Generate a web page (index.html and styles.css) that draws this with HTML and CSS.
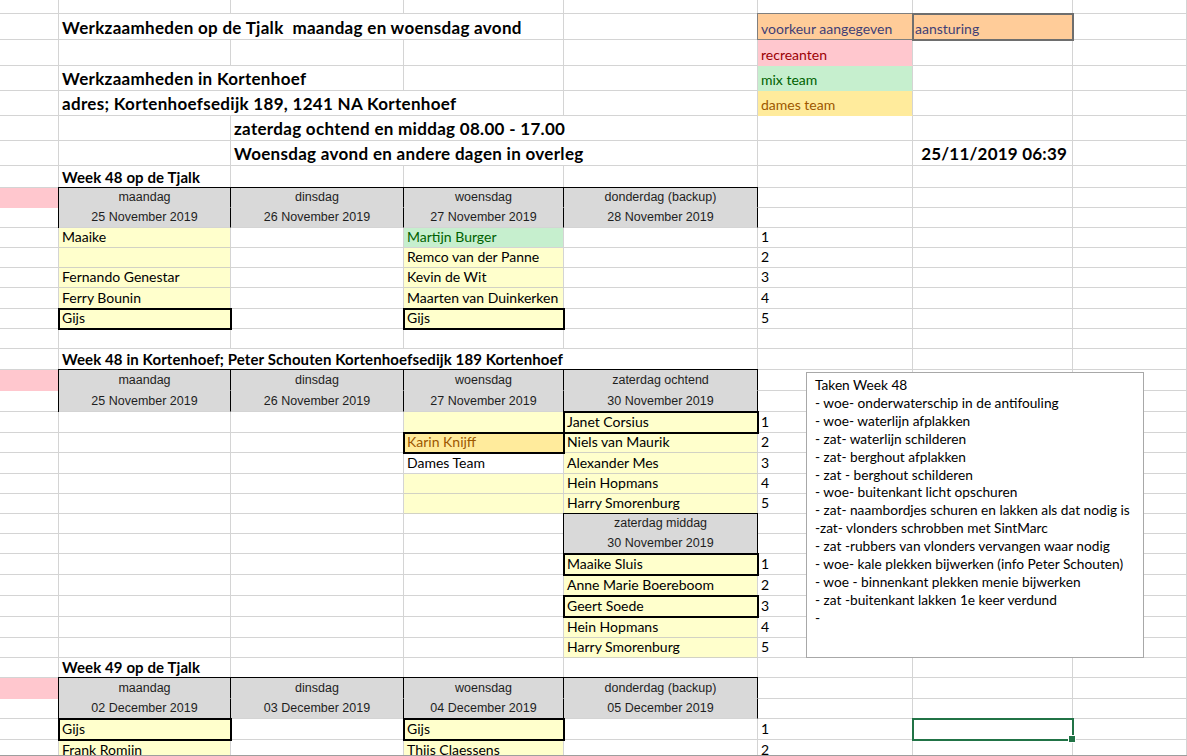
FILE: index.html
```html
<!DOCTYPE html>
<html lang="nl">
<head>
    <meta charset="UTF-8">
    <meta name="viewport" content="width=device-width, initial-scale=1.0">
    <title>Werkzaamheden Tjalk</title>
    <link rel="stylesheet" href="styles.css">
</head>
<body>
<div class="sheet">

    <div class="row h14"><div class="c"></div><div class="c"></div><div class="c"></div><div class="c"></div><div class="c"></div><div class="c"></div><div class="c"></div><div class="c"></div></div>

    <div class="row h26">
        <div class="c"></div>
        <div class="c s3 title">Werkzaamheden op de Tjalk&nbsp; maandag en woensdag avond</div>
        <div class="c"></div>
        <div class="c input">voorkeur aangegeven</div>
        <div class="c input lead">aansturing</div>
        <div class="c"></div>
    </div>

    <div class="row h26"><div class="c"></div><div class="c"></div><div class="c"></div><div class="c"></div><div class="c"></div><div class="c bad">recreanten</div><div class="c"></div><div class="c"></div></div>

    <div class="row h25">
        <div class="c"></div>
        <div class="c s2 title">Werkzaamheden in Kortenhoef</div>
        <div class="c"></div><div class="c"></div>
        <div class="c good legend">mix team</div>
        <div class="c"></div><div class="c"></div>
    </div>

    <div class="row h25">
        <div class="c"></div>
        <div class="c s3 title">adres; Kortenhoefsedijk 189, 1241 NA Kortenhoef</div>
        <div class="c"></div>
        <div class="c neutral legend">dames team</div>
        <div class="c"></div><div class="c"></div>
    </div>

    <div class="row h25">
        <div class="c"></div><div class="c"></div>
        <div class="c s3 title">zaterdag ochtend en middag 08.00 - 17.00</div>
        <div class="c"></div><div class="c"></div><div class="c"></div>
    </div>

    <div class="row h25">
        <div class="c"></div><div class="c"></div>
        <div class="c s3 title">Woensdag avond en andere dagen in overleg</div>
        <div class="c"></div>
        <div class="c title right">25/11/2019 06:39</div>
        <div class="c"></div>
    </div>

    <!-- week 48 op de tjalk -->
    <div class="row h22"><div class="c"></div><div class="c week">Week 48 op de Tjalk</div><div class="c"></div><div class="c"></div><div class="c"></div><div class="c"></div><div class="c"></div><div class="c"></div></div>
    <div class="row">
        <div class="c pink"></div>
        <div class="c hd first">maandag</div>
        <div class="c hd">dinsdag</div>
        <div class="c hd">woensdag</div>
        <div class="c hd">donderdag (backup)</div>
        <div class="c"></div><div class="c"></div><div class="c"></div>
    </div>
    <div class="row">
        <div class="c"></div>
        <div class="c hd2 first">25 November 2019</div>
        <div class="c hd2">26 November 2019</div>
        <div class="c hd2">27 November 2019</div>
        <div class="c hd2">28 November 2019</div>
        <div class="c"></div><div class="c"></div><div class="c"></div>
    </div>
    <div class="row"><div class="c"></div><div class="c note">Maaike</div><div class="c"></div><div class="c good">Martijn Burger</div><div class="c"></div><div class="c">1</div><div class="c"></div><div class="c"></div></div>
    <div class="row"><div class="c"></div><div class="c note"></div><div class="c"></div><div class="c note">Remco van der Panne</div><div class="c"></div><div class="c">2</div><div class="c"></div><div class="c"></div></div>
    <div class="row"><div class="c"></div><div class="c note">Fernando Genestar</div><div class="c"></div><div class="c note">Kevin de Wit</div><div class="c"></div><div class="c">3</div><div class="c"></div><div class="c"></div></div>
    <div class="row h21"><div class="c"></div><div class="c note">Ferry Bounin</div><div class="c"></div><div class="c note">Maarten van Duinkerken</div><div class="c"></div><div class="c">4</div><div class="c"></div><div class="c"></div></div>
    <div class="row"><div class="c"></div><div class="c note thick">Gijs</div><div class="c"></div><div class="c note thick">Gijs</div><div class="c"></div><div class="c">5</div><div class="c"></div><div class="c"></div></div>
    <div class="row"><div class="c"></div><div class="c"></div><div class="c"></div><div class="c"></div><div class="c"></div><div class="c"></div><div class="c"></div><div class="c"></div></div>

    <!-- week 48 in kortenhoef -->
    <div class="row h21">
        <div class="c"></div>
        <div class="c s4 week">Week 48 in Kortenhoef; Peter Schouten Kortenhoefsedijk 189 Kortenhoef</div>
        <div class="c"></div><div class="c"></div><div class="c"></div>
    </div>
    <div class="row h21">
        <div class="c pink"></div>
        <div class="c hd first">maandag</div>
        <div class="c hd">dinsdag</div>
        <div class="c hd">woensdag</div>
        <div class="c hd">zaterdag ochtend</div>
        <div class="c"></div><div class="c"></div><div class="c"></div>
    </div>
    <div class="row h21">
        <div class="c"></div>
        <div class="c hd2 first">25 November 2019</div>
        <div class="c hd2">26 November 2019</div>
        <div class="c hd2">27 November 2019</div>
        <div class="c hd2">30 November 2019</div>
        <div class="c"></div><div class="c"></div><div class="c"></div>
    </div>
    <div class="row h21"><div class="c"></div><div class="c"></div><div class="c"></div><div class="c note"></div><div class="c note thick">Janet Corsius</div><div class="c">1</div><div class="c"></div><div class="c"></div></div>
    <div class="row"><div class="c"></div><div class="c"></div><div class="c"></div><div class="c neutral thick">Karin Knijff</div><div class="c note">Niels van Maurik</div><div class="c">2</div><div class="c"></div><div class="c"></div></div>
    <div class="row h21"><div class="c"></div><div class="c"></div><div class="c"></div><div class="c">Dames Team</div><div class="c note">Alexander Mes</div><div class="c">3</div><div class="c"></div><div class="c"></div></div>
    <div class="row"><div class="c"></div><div class="c"></div><div class="c"></div><div class="c note"></div><div class="c note">Hein Hopmans</div><div class="c">4</div><div class="c"></div><div class="c"></div></div>
    <div class="row"><div class="c"></div><div class="c"></div><div class="c"></div><div class="c note"></div><div class="c note">Harry Smorenburg</div><div class="c">5</div><div class="c"></div><div class="c"></div></div>
    <div class="row h19"><div class="c"></div><div class="c"></div><div class="c"></div><div class="c"></div><div class="c hd first">zaterdag middag</div><div class="c"></div><div class="c"></div><div class="c"></div></div>
    <div class="row h21"><div class="c"></div><div class="c"></div><div class="c"></div><div class="c"></div><div class="c hd2 first">30 November 2019</div><div class="c"></div><div class="c"></div><div class="c"></div></div>
    <div class="row h21"><div class="c"></div><div class="c"></div><div class="c"></div><div class="c"></div><div class="c note thick">Maaike Sluis</div><div class="c">1</div><div class="c"></div><div class="c"></div></div>
    <div class="row h21"><div class="c"></div><div class="c"></div><div class="c"></div><div class="c"></div><div class="c note">Anne Marie Boereboom</div><div class="c">2</div><div class="c"></div><div class="c"></div></div>
    <div class="row h21"><div class="c"></div><div class="c"></div><div class="c"></div><div class="c"></div><div class="c note thick">Geert Soede</div><div class="c">3</div><div class="c"></div><div class="c"></div></div>
    <div class="row h21"><div class="c"></div><div class="c"></div><div class="c"></div><div class="c"></div><div class="c note">Hein Hopmans</div><div class="c">4</div><div class="c"></div><div class="c"></div></div>
    <div class="row"><div class="c"></div><div class="c"></div><div class="c"></div><div class="c"></div><div class="c note">Harry Smorenburg</div><div class="c">5</div><div class="c"></div><div class="c"></div></div>

    <!-- week 49 op de tjalk -->
    <div class="row"><div class="c"></div><div class="c week">Week 49 op de Tjalk</div><div class="c"></div><div class="c"></div><div class="c"></div><div class="c"></div><div class="c"></div><div class="c"></div></div>
    <div class="row h21">
        <div class="c pink"></div>
        <div class="c hd first">maandag</div>
        <div class="c hd">dinsdag</div>
        <div class="c hd">woensdag</div>
        <div class="c hd">donderdag (backup)</div>
        <div class="c"></div><div class="c"></div><div class="c"></div>
    </div>
    <div class="row">
        <div class="c"></div>
        <div class="c hd2 first">02 December 2019</div>
        <div class="c hd2">03 December 2019</div>
        <div class="c hd2">04 December 2019</div>
        <div class="c hd2">05 December 2019</div>
        <div class="c"></div><div class="c"></div><div class="c"></div>
    </div>
    <div class="row h21"><div class="c"></div><div class="c note thick">Gijs</div><div class="c"></div><div class="c note thick">Gijs</div><div class="c"></div><div class="c">1</div><div class="c selected"></div><div class="c"></div></div>
    <div class="row h21"><div class="c"></div><div class="c note">Frank Romijn</div><div class="c"></div><div class="c note">Thijs Claessens</div><div class="c"></div><div class="c">2</div><div class="c"></div><div class="c"></div></div>

    <!-- tekstvak -->
    <div class="textbox">
        <p>Taken Week 48</p>
        <p>- woe- onderwaterschip in de antifouling</p>
        <p>- woe- waterlijn afplakken</p>
        <p>- zat- waterlijn schilderen</p>
        <p>- zat- berghout afplakken</p>
        <p>- zat - berghout schilderen</p>
        <p>- woe- buitenkant licht opschuren</p>
        <p>- zat- naambordjes schuren en lakken als dat nodig is</p>
        <p>-zat- vlonders schrobben met SintMarc</p>
        <p>- zat -rubbers van vlonders vervangen waar nodig</p>
        <p>- woe- kale plekken bijwerken (info Peter Schouten)</p>
        <p>- woe - binnenkant plekken menie bijwerken</p>
        <p>- zat -buitenkant lakken 1e keer verdund</p>
        <p>-</p>
    </div>
</div>
</body>
</html>
```

FILE: styles.css
```css
/* sheet basics */
* {
    margin: 0;
    padding: 0;
    box-sizing: border-box;
}

body {
    background: #fff;
    color: #000;
    font-family: Lato, "Open Sans", sans-serif;
    font-size: 14px;
    overflow: hidden;
}

.sheet {
    position: relative;
    width: 1187px;
    height: 756px;
    overflow: hidden;
    border-bottom: 1px solid #9e9e9e;
}

.row {
    display: grid;
    grid-template-columns: 59px 172px 173px 160px 194px 155px 160px 1fr;
    height: 20px;
}

.h14 { height: 14px; }
.h19 { height: 19px; }
.h21 { height: 21px; }
.h22 { height: 22px; }
.h25 { height: 25px; }
.h26 { height: 26px; }

.c {
    display: flex;
    align-items: flex-end;
    padding: 0 3px 1px;
    line-height: 18px;
    white-space: nowrap;
    border-right: 1px solid #d4d4d4;
    border-bottom: 1px solid #d4d4d4;
}

.s2 { grid-column: span 2; }
.s3 { grid-column: span 3; }
.s4 { grid-column: span 4; }

.title {
    font-weight: bold;
    font-size: 17px;
    letter-spacing: 0.3px;
    padding-left: 3px;
    padding-bottom: 2px;
}

.right {
    justify-content: flex-end;
    padding-right: 5px;
    letter-spacing: 0.2px;
}

.week {
    font-weight: bold;
    font-size: 15px;
    letter-spacing: 0.1px;
}

/* cell styles */
.input {
    background: #ffcc99;
    color: #3f3f76;
    border-bottom-color: #7f7f7f;
    box-shadow: 0 -1px 0 #7f7f7f, -1px 0 0 #7f7f7f, -1px -1px 0 #7f7f7f;
}

.lead {
    position: relative;
    z-index: 1;
    outline: 2px solid #6e6e6e;
    outline-offset: -1px;
    padding-left: 2px;
}

.bad {
    background: #ffc7ce;
    color: #9c0006;
    border-bottom-color: #ffc7ce;
}

.good {
    background: #c6efce;
    color: #006100;
}

.good.legend { border-bottom-color: #c6efce; }
.neutral.legend { border-bottom-color: #ffeb9c; }

.neutral {
    background: #ffeb9c;
    color: #9c5700;
}

.note {
    background: #ffffcc;
    border-bottom-color: #d2d2c4;
}

.pink {
    background: #ffc7ce;
    border-bottom-color: #ffc7ce;
}

.hd,
.hd2 {
    justify-content: center;
    background: #d9d9d9;
    color: #1e1e1e;
    font-family: "Liberation Sans", Arial, sans-serif;
    font-size: 12.5px;
    border-right-color: #000;
}

.hd {
    border-bottom-color: #d9d9d9;
    box-shadow: 0 -1px 0 #000;
}

.hd.first {
    box-shadow: 0 -1px 0 #000, -1px 0 0 #000, -1px -1px 0 #000;
}

.hd2.first {
    box-shadow: -1px 0 0 #000;
}

.thick {
    position: relative;
    z-index: 1;
    outline: 2px solid #000;
    outline-offset: -1px;
}

.selected {
    position: relative;
    z-index: 1;
    outline: 2px solid #217346;
    outline-offset: -1px;
}

.selected::after {
    content: "";
    position: absolute;
    right: -4px;
    bottom: -4px;
    width: 6px;
    height: 6px;
    background: #217346;
    border: 1px solid #fff;
}

/* floating text box */
.textbox {
    position: absolute;
    left: 806px;
    top: 372px;
    width: 338px;
    height: 286px;
    z-index: 2;
    background: #fff;
    border: 1px solid #a8a8a8;
    padding: 3px 8px;
    font-size: 13.7px;
    line-height: 17.9px;
    white-space: nowrap;
}
```
